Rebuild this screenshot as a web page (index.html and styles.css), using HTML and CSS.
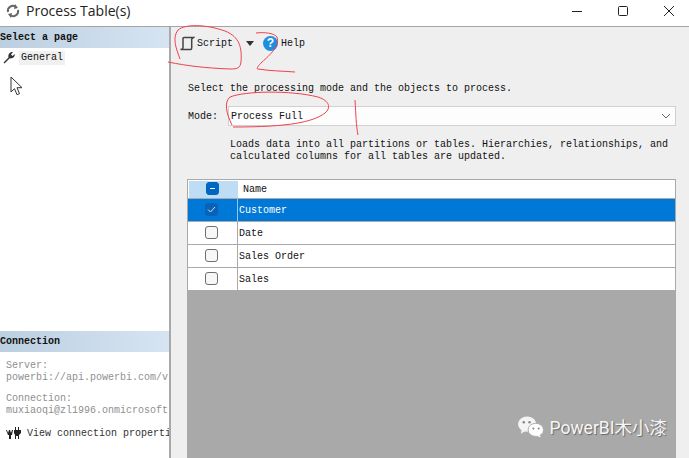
FILE: index.html
```html
<!DOCTYPE html>
<html lang="en">
<head>
<meta charset="utf-8">
<title>Process Table(s)</title>
<link rel="stylesheet" href="styles.css">
</head>
<body>
<div class="window">
  <header class="titlebar">
    <svg class="app-icon" width="16" height="16" viewBox="0 0 16 16"><path d="M3 9a5 5 0 0 1 8-5M13 7a5 5 0 0 1-8 5" fill="none" stroke="#666" stroke-width="2"/><path d="M10 1l3 4-4 1zM6 15l-3-4 4-1z" fill="#666"/></svg>
    <span class="title">Process Table(s)</span>
    <div class="controls">
      <svg width="12" height="12" viewBox="0 0 12 12"><path d="M1 6.500h10" stroke="#222" fill="none"/></svg>
      <svg width="12" height="12" viewBox="0 0 12 12"><rect x="1.500" y="1.500" width="9" height="9" rx="1" stroke="#222" fill="none"/></svg>
      <svg width="12" height="12" viewBox="0 0 12 12"><path d="M1 1l10 10M11 1L1 11" stroke="#222" fill="none"/></svg>
    </div>
  </header>
  <div class="main">
    <aside class="sidebar">
      <div class="side-head">Select a page</div>
      <div class="page-row">
        <svg class="fixed" width="13" height="13" viewBox="0 0 13 13"><path d="M1.500 12.500l-1-1 5-5C5 4 6 1.500 9 1l1 .2L8 3.500l1.500 1.500 2.300-2c.3 3-2.500 5-5 4.300z" fill="#333"/></svg>
        <span class="page-label">General</span>
      </div>
      <div class="cursor-row">
        <svg width="14" height="21" viewBox="0 0 14 21"><path d="M1 1v15l3.500-3.300 2.500 6 2.500-1-2.500-6h5z" fill="#fff" stroke="#333"/></svg>
      </div>
      <div class="side-head conn-head">Connection</div>
      <div class="conn-body">
        <div class="conn-block">Server:<br>powerbi://api.powerbi.com/v</div>
        <div class="conn-block">Connection:<br>muxiaoqi@zl1996.onmicrosoft</div>
        <div class="conn-link">
          <svg class="fixed" width="16" height="13" viewBox="0 0 16 13"><path d="M0 3h1l1 3 1-3h1l1 3 1-3h1L6 8H5v4H3V8H2zM8 3h1V0h1v3h2V0h1v3h2v3l-2 2v4h-1V9h-2v3H9V8L8 6z" fill="#222"/></svg>
          <span class="conn-text">View connection properti</span>
        </div>
      </div>
    </aside>
    <section class="content">
      <div class="toolbar">
        <div class="tool-script">
          <svg class="fixed" width="16" height="15" viewBox="0 0 16 15"><path d="M5 1.500h9.500l-1.800 1.500v9c0 .8-.4 1.500-1.200 1.500H1.500c1.500-.3 2.500-.8 2.500-1.500V2.500c0-.5.400-1 1-1z" fill="none" stroke="#444" stroke-width="1.500"/></svg>
          <span>Script</span>
        </div>
        <span class="caret"></span>
        <div class="tool-help">
          <span class="help-icon">?</span>
          <span>Help</span>
        </div>
      </div>
      <div class="form">
        <p class="intro">Select the processing mode and the objects to process.</p>
        <div class="mode-row">
          <label class="mode-label">Mode:</label>
          <div class="select">
            <span>Process Full</span>
            <svg width="10" height="6" viewBox="0 0 10 6"><path d="M1 1l4 4 4-4" fill="none" stroke="#666"/></svg>
          </div>
        </div>
        <p class="desc">Loads data into all partitions or tables. Hierarchies, relationships, and<br>calculated columns for all tables are updated.</p>
      </div>
      <div class="grid">
        <div class="row head">
          <div class="check-cell head-check"><span class="box mixed"></span></div>
          <div class="name-cell head-name">Name</div>
        </div>
        <div class="row selected">
          <div class="check-cell"><span class="box checked"><svg width="9" height="7" viewBox="0 0 9 7"><path d="M1 3.500l2.500 2.500L8 1" fill="none" stroke="#cfe3f7"/></svg></span></div>
          <div class="name-cell">Customer</div>
        </div>
        <div class="row"><div class="check-cell"><span class="box"></span></div><div class="name-cell">Date</div></div>
        <div class="row"><div class="check-cell"><span class="box"></span></div><div class="name-cell">Sales Order</div></div>
        <div class="row"><div class="check-cell"><span class="box"></span></div><div class="name-cell">Sales</div></div>
        <div class="grid-empty">
          <div class="watermark">
            <svg width="27" height="24" viewBox="0 0 28 24"><ellipse cx="10.500" cy="9" rx="9.500" ry="8" fill="#f4f4f4"/><path d="M5 14l-1 5 5-3z" fill="#f4f4f4"/><ellipse cx="19.500" cy="15" rx="8" ry="6.800" fill="#fff" stroke="#aaa"/><path d="M23 20l2 3-5-2z" fill="#fff"/><circle cx="7" cy="7" r="1.300" fill="#888"/><circle cx="13" cy="7" r="1.300" fill="#888"/><circle cx="17" cy="13.500" r="1.100" fill="#888"/><circle cx="22.500" cy="13.500" r="1.100" fill="#888"/></svg>
            <span>PowerBI木小漆</span>
          </div>
        </div>
      </div>
    </section>
  </div>
  <svg class="ink" width="689" height="458" viewBox="0 0 689 458">
    <g fill="none" stroke="#f0404f" stroke-width="1">
      <path d="M180 59C176 48 172 38 178 30 185 24 205 24 225 31 240 37 242 48 241 62 240 68 238 69 230 69 205 68 188 66 168 62"/>
      <path d="M256 33C264 32 274 33 277 37 280 46 270 55 262 62 258 66 256 69 258 69 270 71 283 71 295 72"/>
      <path d="M232 125C226 113 224 102 230 97 245 91 290 90 318 97 330 101 331 108 325 113 313 122 290 127 233 127"/>
      <path d="M355 100C356 115 356 125 358 135"/>
    </g>
  </svg>
</div>
</body>
</html>
```
FILE: styles.css
```css
* { box-sizing: border-box; }
html, body { margin: 0; padding: 0; }
body { background: #fff; font-family: "Liberation Mono", monospace; font-size: 10px; color: #111; }
.window { position: relative; width: 689px; height: 458px; overflow: hidden; display: flex; flex-direction: column; }
.titlebar { height: 27px; flex: none; display: flex; align-items: center; padding: 0 0 5px 5px; border-bottom: 1px solid #a5a5a5; }
.title { margin-left: 5px; font-family: "Open Sans", "Liberation Sans", sans-serif; font-size: 14px; color: #222; }
.controls { margin-left: auto; display: flex; gap: 34px; padding-right: 14px; }
.main { flex: 1; display: flex; min-height: 0; }
.fixed { flex: none; }
.sidebar { width: 171px; flex: none; display: flex; flex-direction: column; border-right: 2px solid #a9a9a9; overflow: hidden; white-space: nowrap; }
.side-head { height: 21px; flex: none; background: linear-gradient(90deg, #bccfe0, #d6e4f2); font-weight: 700; line-height: 21px; }
.page-row { display: flex; align-items: center; gap: 3px; padding: 0 0 4px 3px; height: 25px; margin-top: -1px; }
.page-label { background: #f0f0f0; padding: 1px 2px; height: 14px; line-height: 12px; }
.cursor-row { flex: 1; padding: 4px 0 0 10px; }
.conn-head { margin-bottom: 8px; }
.conn-body { height: 98px; flex: none; padding-left: 6px; color: #8f8f8f; }
.conn-block { line-height: 12px; margin-bottom: 9px; }
.conn-block + .conn-block { margin-bottom: 10px; }
.conn-link { display: flex; align-items: center; gap: 5px; color: #333; }
.conn-text { min-width: 0; overflow: hidden; }
.content { flex: 1; min-width: 0; background: #efefef; padding-left: 16px; padding-right: 13px; display: flex; flex-direction: column; }
.toolbar { height: 33px; margin-left: -8px; display: flex; align-items: center; flex: none; }
.tool-script { display: flex; align-items: center; gap: 2px; }
.caret { margin-left: 13px; width: 0; height: 0; border-left: 4px solid transparent; border-right: 4px solid transparent; border-top: 5px solid #333; }
.tool-help { margin-left: 9px; display: flex; align-items: center; gap: 3px; }
.help-icon { width: 15px; height: 15px; border-radius: 50%; background: #1d8fe0; color: #fff; font: 700 12px/15px "Liberation Sans", sans-serif; text-align: center; }
.form { flex: none; }
.intro { margin: 23px 0 0 1px; line-height: 12px; }
.mode-row { display: flex; align-items: center; margin-top: 11px; height: 20px; }
.mode-label { width: 41px; padding-left: 1px; }
.select { flex: 1; height: 20px; background: #fdfdfd; border: 1px solid #d0d0d0; display: flex; align-items: center; justify-content: space-between; padding: 0 4px 0 2px; }
.desc { margin: 13px 0 0 43px; line-height: 12px; }
.grid { margin-top: 16px; flex: 1; border: 1px solid #a9a9a9; border-bottom: 0; display: flex; flex-direction: column; min-height: 0; }
.row { display: flex; height: 23px; flex: none; background: #fff; border-bottom: 1px solid #a9a9a9; }
.row.head { height: 19px; }
.check-cell { width: 50px; flex: none; display: flex; align-items: center; justify-content: center; padding: 0 2px 1px 0; border-right: 1px solid #a9a9a9; }
.head-check { background: #bedcf3; margin: 1px 0 0 1px; width: 49px; height: 17px; border-right: 0; padding: 0 3px 2px 0; }
.name-cell { flex: 1; padding-left: 1px; line-height: 24px; }
.head-name { padding-left: 5px; line-height: 20px; }
.box { width: 13px; height: 13px; flex: none; border: 1px solid #6f6f6f; border-radius: 3px; background: #f7f7f7; display: flex; align-items: center; justify-content: center; }
.box.mixed { background: #0067c0; border-color: #0067c0; }
.box.mixed::before { content: ""; width: 5px; height: 1px; background: #fff; }
.box.checked { background: #0a62b8; border-color: #0a62b8; }
.row.selected { background: #0078d7; color: #fff; }
.row.selected .check-cell { border-right-color: #9cc4e8; }
.grid-empty { flex: 1; background: #a9a9a9; display: flex; align-items: flex-end; justify-content: flex-end; }
.watermark { display: flex; align-items: center; gap: 6px; padding: 0 8px 19px 0; color: #f6f6f6; font-family: "Roboto", "Noto Sans CJK SC", sans-serif; font-size: 17.500px; text-shadow: 1px 1px 1px #666; }
.ink { position: absolute; left: 0; top: 0; pointer-events: none; }
```
